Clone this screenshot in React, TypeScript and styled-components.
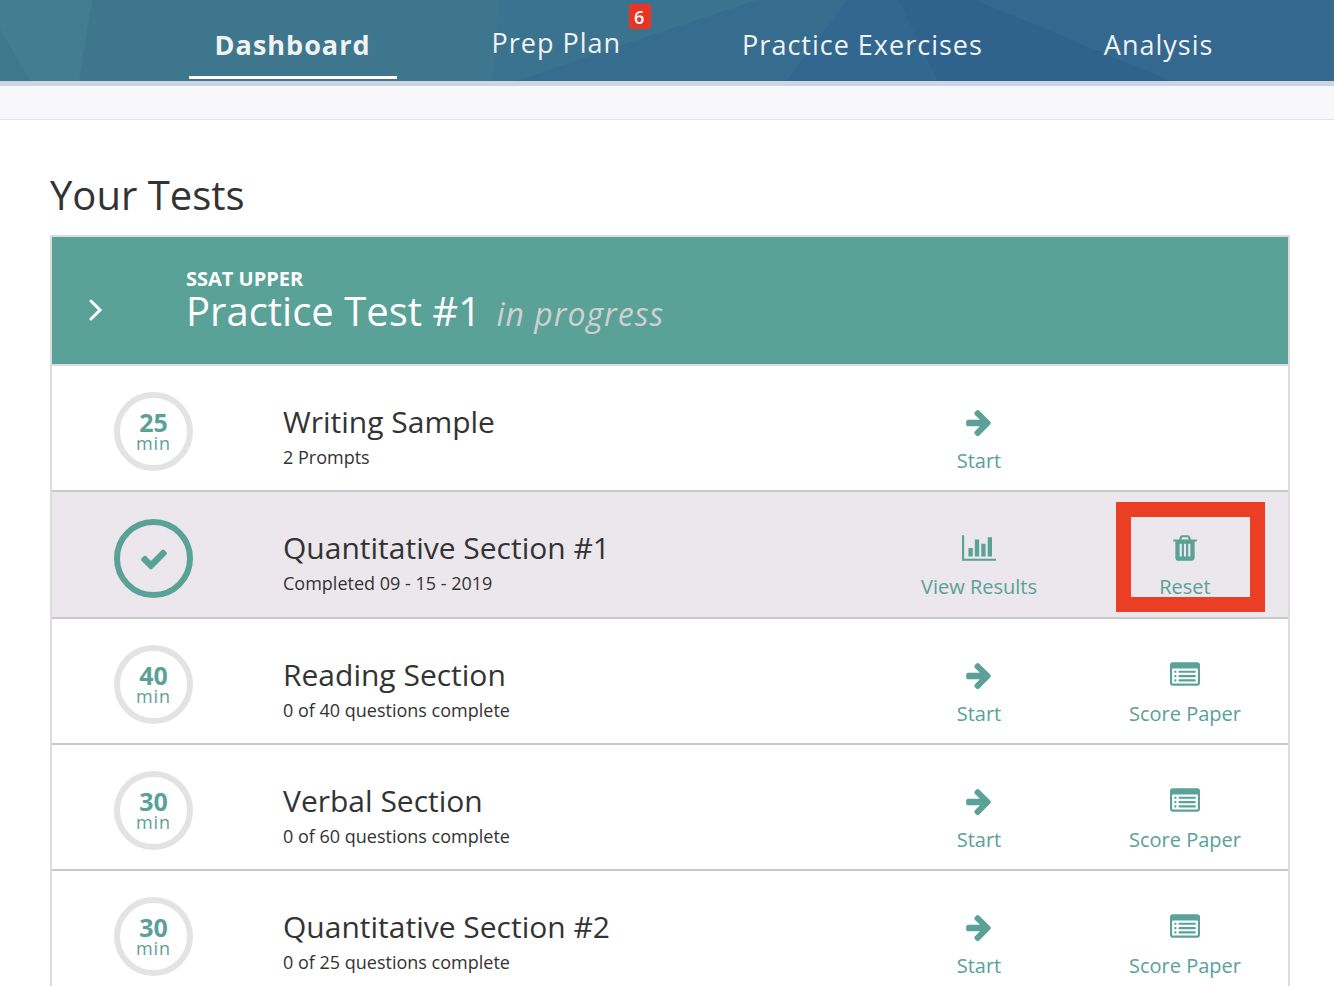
import React from "react";
import styled, { createGlobalStyle } from "styled-components";

const teal = "#5aa197";

const GlobalStyle = createGlobalStyle`
  *, *::before, *::after { box-sizing: border-box; }
  html { scrollbar-width: none; }
  body {
    margin: 0;
    background: #fff;
    color: #333;
    font-family: "Open Sans", "Noto Sans", sans-serif;
  }
  h1, h2, h3, p, ul { margin: 0; padding: 0; font-weight: 400; }
  ul { list-style: none; }
  button { font: inherit; border: 0; padding: 0; background: none; cursor: pointer; }
`;

const Header = styled.header`
  position: relative;
  height: 86px;
  border-bottom: 5px solid #cbd6e2;
  background: #3e778d;
`;

const Facets = styled.svg`
  position: absolute;
  inset: 0;
  width: 100%;
  height: 100%;
`;

const Nav = styled.nav`
  position: relative;
  display: flex;
  justify-content: center;
  gap: 69px;
  height: 79px;
  padding-left: 94px;
`;

const NavLink = styled.a<{ $active?: boolean; $raised?: boolean }>`
  position: relative;
  padding: ${(p) => (p.$raised ? 24 : 26)}px 26px 0;
  border-bottom: 3px solid ${(p) => (p.$active ? "#fff" : "transparent")};
  color: #f0f2f4;
  font-size: 27px;
  line-height: 38px;
  letter-spacing: 1px;
  font-weight: ${(p) => (p.$active ? 700 : 400)};
  text-decoration: none;
  white-space: nowrap;
`;

const Badge = styled.span`
  position: absolute;
  top: 4px;
  right: -4px;
  width: 22px;
  height: 25px;
  padding-right: 2px;
  border-radius: 3px;
  background: #ea3323;
  color: #fff;
  font-size: 18px;
  font-weight: 600;
  line-height: 26px;
  letter-spacing: 0;
  text-align: center;
`;

const SubBar = styled.div`
  height: 34px;
  background: #f8f8fb;
  border-bottom: 1px solid #e4e4e6;
`;

const Main = styled.main`
  padding: 47px 44px 0 50px;
`;

const Title = styled.h1`
  font-size: 40px;
  line-height: 56px;
  margin-bottom: 12px;
`;

const TestCard = styled.section`
  border: 2px solid #dcdcdc;
`;

const TestHeader = styled.header`
  display: flex;
  height: 129px;
  padding-top: 28px;
  background: ${teal};
  border-bottom: 2px solid #dcdcdc;
  color: #fff;
`;

const Toggle = styled.button`
  flex: none;
  width: 134px;
  height: 90px;
  padding: 0 0 0 36px;
  display: flex;
  align-items: center;
  color: #fff;
`;

const Level = styled.p`
  font-size: 20px;
  font-weight: 700;
  line-height: 28px;
`;

const TestName = styled.h2`
  font-size: 40px;
  line-height: 36px;
`;

const Status = styled.em`
  margin-left: 5px;
  color: #d0d0d0;
  font-size: 32px;
  letter-spacing: 1px;
`;

const Row = styled.li<{ $done?: boolean }>`
  display: grid;
  grid-template-columns: 231px 1fr 206px 206px;
  height: ${(p) => (p.$done ? 127 : 126)}px;
  background: ${(p) => (p.$done ? "#ebe7ec" : "#fff")};
  border-bottom: 2px solid #c8c8c8;
`;

const Ring = styled.div<{ $done?: boolean }>`
  display: flex;
  flex-direction: column;
  align-items: center;
  justify-content: center;
  width: 79px;
  height: 79px;
  margin: ${(p) => (p.$done ? 27 : 26)}px 0 0 62px;
  border: 6px solid ${(p) => (p.$done ? teal : "#e3e3e3")};
  border-radius: 50%;
  color: ${teal};
`;

const Minutes = styled.strong`
  font-size: 25px;
  line-height: 22px;
`;

const Unit = styled.span`
  font-size: 18px;
  line-height: 20px;
  letter-spacing: 1px;
`;

const Info = styled.div`
  padding-top: 36px;
`;

const SectionName = styled.h3`
  font-size: 30px;
  line-height: 40px;
`;

const Detail = styled.p`
  font-size: 18px;
  line-height: 30px;
`;

const Action = styled.button`
  position: relative;
  display: flex;
  flex-direction: column;
  align-items: center;
  justify-content: flex-start;
  padding-top: 41px;
  color: ${teal};
  font-size: 20px;
  line-height: 28px;
`;

const ActionIcon = styled.svg`
  display: block;
  height: 30px;
  margin-bottom: 10px;
  fill: currentColor;
`;

const Highlight = styled.span`
  position: absolute;
  top: 10px;
  left: 50%;
  width: 149px;
  height: 110px;
  margin-left: -69px;
  border: 15px solid #eb3f25;
`;

type IconName = "arrow" | "chart" | "trash" | "list" | "check";

const slot = (x: number) =>
  `M${x} 1376v-704q0-14-9-23t-23-9h-64q-14 0-23 9t-9 23v704q0 14 9 23t23 9h64q14 0 23-9t9-23z`;
const bullet = (y: number) =>
  `M384 ${y}v64q0 13-9.500 22.500t-22.500 9.500h-64q-13 0-22.500-9.500t-9.500-22.500v-64q0-13 9.500-22.500t22.500-9.500h64q13 0 22.500 9.500t9.500 22.500z`;
const line = (y: number) =>
  `M1536 ${y}v64q0 13-9.500 22.500t-22.500 9.500h-960q-13 0-22.500-9.500t-9.500-22.500v-64q0-13 9.500-22.500t22.500-9.500h960q13 0 22.500 9.500t9.500 22.500z`;

const icons: Record<IconName, { width: number; d: string }> = {
  arrow: {
    width: 1792,
    d: "M1600 960q0 54-37 91l-651 651q-39 37-91 37-51 0-90-37l-75-75q-38-38-38-91t38-91l293-293h-704q-52 0-84.500-37.500t-32.500-90.500v-128q0-53 32.500-90.500t84.500-37.500h704l-293-294q-38-36-38-90t38-90l75-75q38-38 90-38 53 0 91 38l651 651q37 35 37 90z",
  },
  chart: {
    width: 2048,
    d: "M640 896v512h-256v-512h256zm384-512v1024h-256v-1024h256zm1024 1152v128h-2048v-1536h128v1408h1920zm-640-896v768h-256v-768h256zm384-384v1152h-256v-1152h256z",
  },
  trash: {
    width: 1792,
    d:
      slot(704) + slot(960) + slot(1216) +
      "M672 384h448l-48-117q-7-9-17-11h-317q-10 2-17 11zm928 32v64q0 14-9 23t-23 9h-96v948q0 83-47 143.500t-113 60.500h-832q-66 0-113-58.500t-47-141.500v-952h-96q-14 0-23-9t-9-23v-64q0-14 9-23t23-9h309l70-167q15-37 54-63t79-26h320q40 0 79 26t54 63l70 167h309q14 0 23 9t9 23z",
  },
  list: {
    width: 1792,
    d:
      bullet(1184) + bullet(928) + bullet(672) + line(1184) + line(928) + line(672) +
      "M1664 1376v-832q0-13-9.500-22.500t-22.500-9.500h-1472q-13 0-22.500 9.500t-9.500 22.500v832q0 13 9.500 22.500t22.500 9.500h1472q13 0 22.500-9.500t9.500-22.500zm128-1088v1088q0 66-47 113t-113 47h-1472q-66 0-113-47t-47-113v-1088q0-66 47-113t113-47h1472q66 0 113 47t47 113z",
  },
  check: {
    width: 1792,
    d: "M1671 566q0 40-28 68l-724 724-136 136q-28 28-68 28t-68-28l-136-136-362-362q-28-28-28-68t28-68l136-136q28-28 68-28t68 28l294 295 656-657q28-28 68-28t68 28l136 136q28 28 28 68z",
  },
};

const CheckIcon = styled.svg`
  display: block;
  height: 30px;
  fill: currentColor;
`;

function Icon({ name }: { name: IconName }) {
  const { width, d } = icons[name];
  const Svg = name === "check" ? CheckIcon : ActionIcon;
  return (
    <Svg viewBox={`0 0 ${width} 1792`} aria-hidden="true">
      <path d={d} fillRule="evenodd" />
    </Svg>
  );
}

interface SectionAction {
  icon: IconName;
  label: string;
  highlighted?: boolean;
}

interface Section {
  name: string;
  detail: string;
  minutes?: number;
  actions: SectionAction[];
}

const start: SectionAction = { icon: "arrow", label: "Start" };
const score: SectionAction = { icon: "list", label: "Score Paper" };

const sections: Section[] = [
  { name: "Writing Sample", detail: "2 Prompts", minutes: 25, actions: [start] },
  {
    name: "Quantitative Section #1",
    detail: "Completed 09 - 15 - 2019",
    actions: [
      { icon: "chart", label: "View Results" },
      { icon: "trash", label: "Reset", highlighted: true },
    ],
  },
  { name: "Reading Section", detail: "0 of 40 questions complete", minutes: 40, actions: [start, score] },
  { name: "Verbal Section", detail: "0 of 60 questions complete", minutes: 30, actions: [start, score] },
  { name: "Quantitative Section #2", detail: "0 of 25 questions complete", minutes: 30, actions: [start, score] },
];

function SectionRow({ section }: { section: Section }) {
  const done = section.minutes === undefined;
  return (
    <Row $done={done}>
      <Ring $done={done}>
        {done ? (
          <Icon name="check" />
        ) : (
          <>
            <Minutes>{section.minutes}</Minutes>
            <Unit>min</Unit>
          </>
        )}
      </Ring>
      <Info>
        <SectionName>{section.name}</SectionName>
        <Detail>{section.detail}</Detail>
      </Info>
      {section.actions.map((action) => (
        <Action key={action.label} type="button">
          <Icon name={action.icon} />
          {action.label}
          {action.highlighted && <Highlight />}
        </Action>
      ))}
    </Row>
  );
}

export default function App() {
  return (
    <>
      <GlobalStyle />
      <Header>
        <Facets viewBox="0 0 1334 81" preserveAspectRatio="none" aria-hidden="true">
          <polygon points="0,0 92,0 79,81 0,81" fill="#437d90" />
          <polygon points="0,29 30,81 0,81" fill="#3e788c" />
          <polygon points="499,0 1334,0 1334,81 492,81" fill="#3a7390" />
          <polygon points="757,0 1334,0 1334,81 516,81 667,30" fill="#366d8f" />
          <polygon points="848,0 1334,0 1334,81 786,81" fill="#32678f" />
          <polygon points="899,0 1334,0 1334,81 938,81" fill="#2f628c" />
          <polygon points="975,0 1334,0 1334,81 1170,81" fill="#34688f" />
          <polygon points="1265,0 1334,0 1334,70" fill="#33698c" />
        </Facets>
        <Nav>
          <NavLink href="#dashboard" $active>Dashboard</NavLink>
          <NavLink href="#prep-plan" $raised>
            Prep Plan
            <Badge>6</Badge>
          </NavLink>
          <NavLink href="#exercises">Practice Exercises</NavLink>
          <NavLink href="#analysis">Analysis</NavLink>
        </Nav>
      </Header>
      <SubBar />
      <Main>
        <Title>Your Tests</Title>
        <TestCard>
          <TestHeader>
            <Toggle type="button" aria-label="Toggle test sections">
              <svg width="16" height="22" viewBox="0 0 16 22" fill="none" stroke="currentColor" strokeWidth="3" strokeLinecap="round" aria-hidden="true">
                <path d="M3 2L12 11L3 20" />
              </svg>
            </Toggle>
            <div>
              <Level>SSAT UPPER</Level>
              <TestName>
                Practice Test #1 <Status>in progress</Status>
              </TestName>
            </div>
          </TestHeader>
          <ul>
            {sections.map((section) => (
              <SectionRow key={section.name} section={section} />
            ))}
          </ul>
        </TestCard>
      </Main>
    </>
  );
}
